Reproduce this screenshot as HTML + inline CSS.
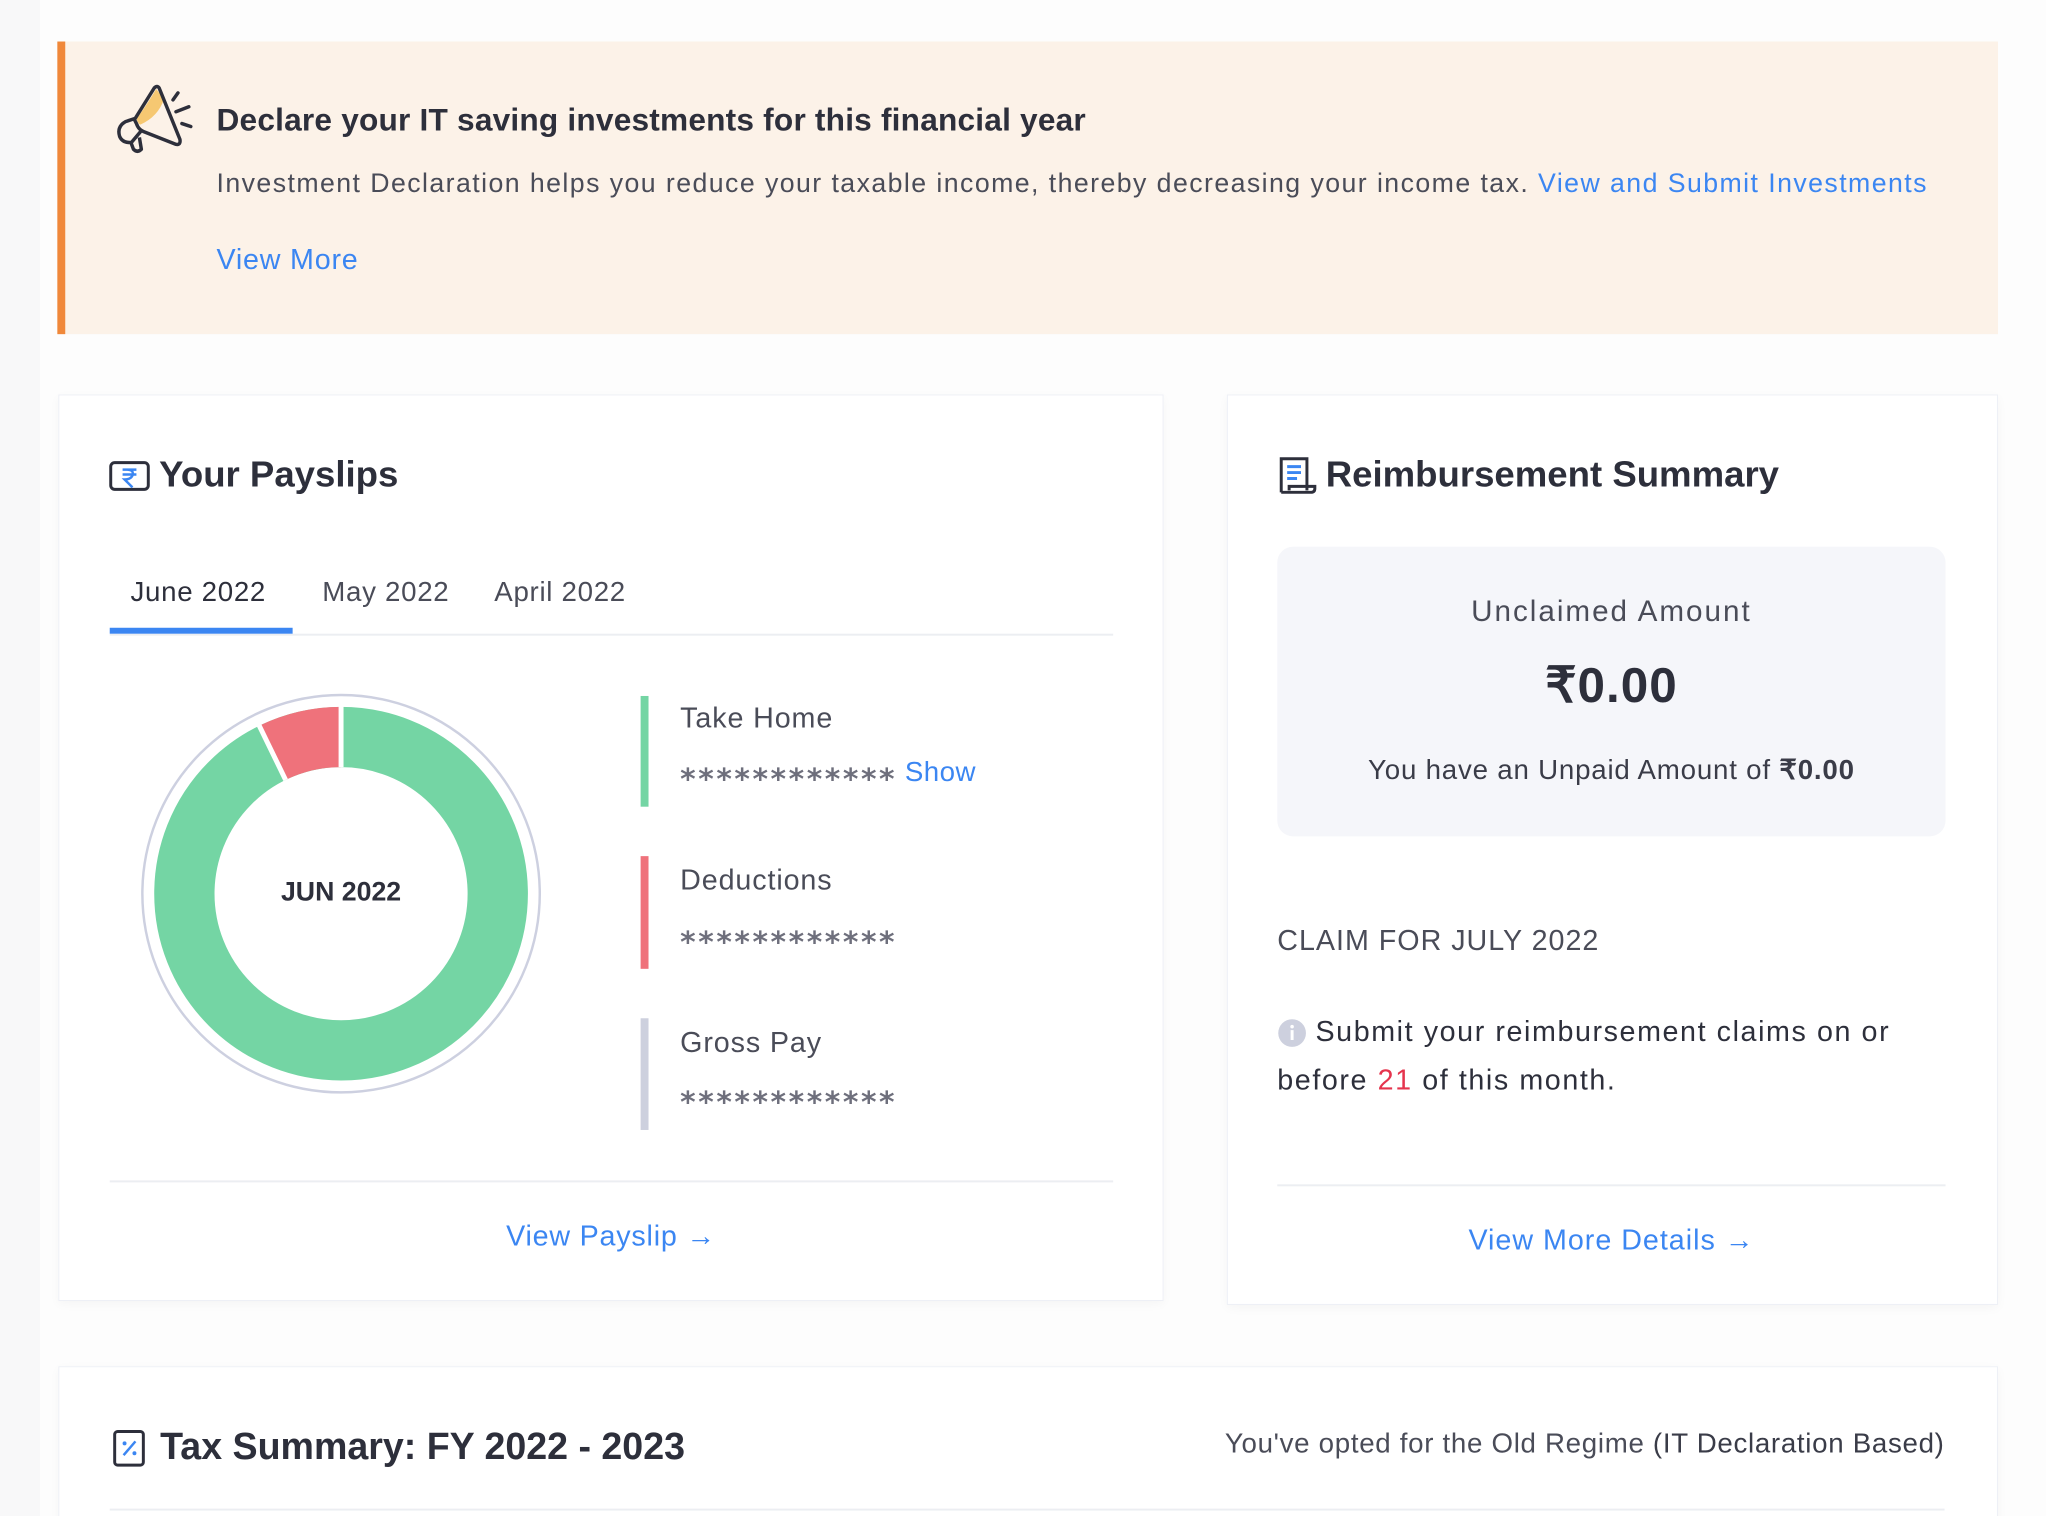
<!DOCTYPE html>
<html><head><meta charset="utf-8"><style>
*{margin:0;padding:0;box-sizing:border-box}
html{overflow:hidden;width:2046px;height:1516px}
body{width:2046px;height:1516px;background:#fdfdfd;font-family:"Liberation Sans",sans-serif;color:#2d2f3b;position:relative;overflow:hidden}
#w{position:absolute;left:0;top:0;width:2046px;height:1516px;transform:scale(0.9886);transform-origin:0 0}
.a{position:absolute;white-space:nowrap}
.card{position:absolute;background:#fff;border:1px solid #eef0f6;box-shadow:0 3px 10px rgba(0,0,0,0.035)}
.blue{color:#3b86f2}
.gray{color:#4a4c58}
.st{font-family:"DejaVu Sans",sans-serif;font-weight:bold;font-size:30px;letter-spacing:2.6px;color:#6e6f7c;position:relative;top:8px}
</style></head><body>
<div class="a" style="left:0;top:0;width:40px;height:1516px;background:#f8f8f9"></div>
<div id="w">
<div class="a" style="left:58px;top:42px;width:1963px;height:296px;background:#fcf2e8;border-left:8px solid #f0883a"></div>
<svg class="a" style="left:110px;top:80px" width="100" height="90" viewBox="110 80 100 90">
<path d="M158 90 Q146 110 138 120 Q140 126 142 126 Q160 118 166 100 Z" fill="#f6c872"/>
<path d="M156 89 Q159 86 161 89 L182 141 Q183 147 178 146 L145 133 Q140 131 138 125 L136 121 Z" fill="none" stroke="#2d2f3b" stroke-width="3.5" stroke-linejoin="round"/>
<path d="M136 120 L127 123 Q118 128 121 138 Q124 145 133 144 L144 131" fill="none" stroke="#2d2f3b" stroke-width="3.5" stroke-linejoin="round"/>
<path d="M132 143 L135 151 Q139 155 143 151 L141 139" fill="none" stroke="#2d2f3b" stroke-width="3.5" stroke-linejoin="round"/>
<path d="M175 101 L180 94 M178 113 L191 108 M184 125 L193 128" stroke="#2d2f3b" stroke-width="3.5" stroke-linecap="round"/>
</svg>
<div class="a" style="left:219px;top:100px;font-size:32px;font-weight:bold;line-height:42px;letter-spacing:0.2px">Declare your IT saving investments for this financial year</div>
<div class="a gray" style="left:219px;top:167px;font-size:27px;line-height:36px;letter-spacing:1.45px">Investment Declaration helps you reduce your taxable income, thereby decreasing your income tax. <span class="blue">View and Submit Investments</span></div>
<div class="a blue" style="left:219px;top:245px;font-size:29px;line-height:36px;letter-spacing:0.8px">View More</div>

<div class="card" style="left:59px;top:399px;width:1118px;height:917px"></div>
<svg class="a" style="left:110px;top:466px" width="42" height="32" viewBox="0 0 42 32"><rect x="2" y="2" width="38" height="27" rx="4" fill="none" stroke="#2d2f3b" stroke-width="3"/><path d="M14 9h14M14 14h14M18 9q8 0 6 6q-2 4-8 4l8 8" fill="none" stroke="#3b86f2" stroke-width="2.5"/></svg>
<div class="a" style="left:161px;top:458px;font-size:37px;font-weight:bold;line-height:44px">Your Payslips</div>
<div class="a" style="left:132px;top:582px;font-size:28px;line-height:34px;letter-spacing:0.7px">June 2022</div>
<div class="a gray" style="left:326px;top:582px;font-size:28px;line-height:34px;letter-spacing:0.7px">May 2022</div>
<div class="a gray" style="left:500px;top:582px;font-size:28px;line-height:34px;letter-spacing:0.7px">April 2022</div>
<div class="a" style="left:111px;top:641px;width:1015px;height:2px;background:#eceef2"></div>
<div class="a" style="left:111px;top:635px;width:185px;height:6px;background:#3b86f2"></div>
<svg class="a" style="left:0;top:0" width="700" height="1200">
<circle cx="345" cy="904" r="201" fill="none" stroke="#cdd0e0" stroke-width="2.5"/>
<circle cx="345" cy="904" r="158.5" fill="none" stroke="#74d5a4" stroke-width="61"/>
<path d="M345 745.5 A158.5 158.5 0 0 0 275.6 761.5" fill="none" stroke="#ef727b" stroke-width="61"/>
<path d="M345 776 L345 713 M288.9 788.9 L261.5 732.5" stroke="#fff" stroke-width="5"/>
</svg>
<div class="a" style="left:245px;top:885px;width:200px;text-align:center;font-size:27px;font-weight:bold;line-height:34px">JUN 2022</div>
<div class="a" style="left:648px;top:704px;width:8px;height:112px;background:#74d5a4"></div>
<div class="a" style="left:648px;top:866px;width:8px;height:114px;background:#ef727b"></div>
<div class="a" style="left:648px;top:1030px;width:8px;height:113px;background:#cdd0de"></div>
<div class="a gray" style="left:688px;top:710px;font-size:29px;line-height:34px;letter-spacing:0.9px">Take Home</div>
<div class="a" style="left:688px;top:764px;font-size:28px;line-height:34px"><span class="st">************</span> <span class="blue" style="letter-spacing:0.5px">Show</span></div>
<div class="a gray" style="left:688px;top:874px;font-size:29px;line-height:34px;letter-spacing:0.9px">Deductions</div>
<div class="a" style="left:688px;top:929px;font-size:28px;line-height:34px"><span class="st">************</span></div>
<div class="a gray" style="left:688px;top:1038px;font-size:29px;line-height:34px;letter-spacing:0.9px">Gross Pay</div>
<div class="a" style="left:688px;top:1091px;font-size:28px;line-height:34px"><span class="st">************</span></div>
<div class="a" style="left:111px;top:1194px;width:1015px;height:2px;background:#eceef2"></div>
<div class="a blue" style="left:418px;top:1234px;width:400px;text-align:center;font-size:29px;line-height:34px;letter-spacing:0.8px">View Payslip <b>&#8594;</b></div>

<div class="card" style="left:1241px;top:399px;width:780px;height:921px"></div>
<svg class="a" style="left:1292px;top:460px" width="40" height="42" viewBox="0 0 40 42"><path d="M4 38V4h26v32M4 38h30q4 0 4-4v-2H12v4" fill="none" stroke="#2d2f3b" stroke-width="3"/><path d="M10 12h14M10 18h14M10 24h10" stroke="#3b86f2" stroke-width="3"/></svg>
<div class="a" style="left:1341px;top:458px;font-size:37px;font-weight:bold;line-height:44px">Reimbursement Summary</div>
<div class="a" style="left:1292px;top:553px;width:676px;height:293px;background:#f5f6fa;border-radius:16px"></div>
<div class="a gray" style="left:1292px;top:601px;width:676px;text-align:center;font-size:30px;line-height:36px;letter-spacing:2px">Unclaimed Amount</div>
<div class="a" style="left:1292px;top:664px;width:676px;text-align:center;font-size:50px;font-weight:bold;line-height:58px;letter-spacing:1px">₹0.00</div>
<div class="a" style="left:1292px;top:762px;width:676px;text-align:center;font-size:28px;line-height:34px;color:#3a3c48;letter-spacing:0.8px">You have an Unpaid Amount of <b>₹0.00</b></div>
<div class="a gray" style="left:1292px;top:935px;font-size:29px;line-height:34px;letter-spacing:1px">CLAIM FOR JULY 2022</div>
<svg class="a" style="left:1292px;top:1030px" width="30" height="30"><circle cx="15" cy="15" r="14" fill="#cdd0de"/><rect x="13.5" y="12" width="3" height="10" fill="#fff"/><circle cx="15" cy="8.5" r="1.8" fill="#fff"/></svg>
<div class="a" style="left:1292px;top:1020px;font-size:29px;line-height:49px;white-space:normal;width:690px;letter-spacing:1.6px">&nbsp;&nbsp;&nbsp;&nbsp;Submit your reimbursement claims on or before <span style="color:#e5344d">21</span> of this month.</div>
<div class="a" style="left:1292px;top:1198px;width:676px;height:2px;background:#eceef2"></div>
<div class="a blue" style="left:1292px;top:1238px;width:676px;text-align:center;font-size:29px;line-height:34px;letter-spacing:1px">View More Details <b>&#8594;</b></div>

<div class="card" style="left:59px;top:1382px;width:1962px;height:200px"></div>
<svg class="a" style="left:114px;top:1444px" width="34" height="40" viewBox="0 0 34 40"><rect x="2" y="4" width="29" height="34" rx="3" fill="none" stroke="#2d2f3b" stroke-width="3"/><path d="M11 28l12-14" stroke="#3b86f2" stroke-width="2.5"/><circle cx="12" cy="16" r="2" fill="#3b86f2"/><circle cx="22" cy="26" r="2" fill="#3b86f2"/></svg>
<div class="a" style="left:162px;top:1441px;font-size:38px;font-weight:bold;line-height:46px">Tax Summary: FY 2022 - 2023</div>
<div class="a gray" style="left:1167px;top:1443px;width:800px;text-align:right;font-size:28px;line-height:34px;letter-spacing:0.7px">You've opted for the Old Regime <span style="color:#3a3c48">(IT Declaration Based)</span></div>
<div class="a" style="left:111px;top:1526px;width:1856px;height:2px;background:#eceef2"></div>
</div>
</body></html>
